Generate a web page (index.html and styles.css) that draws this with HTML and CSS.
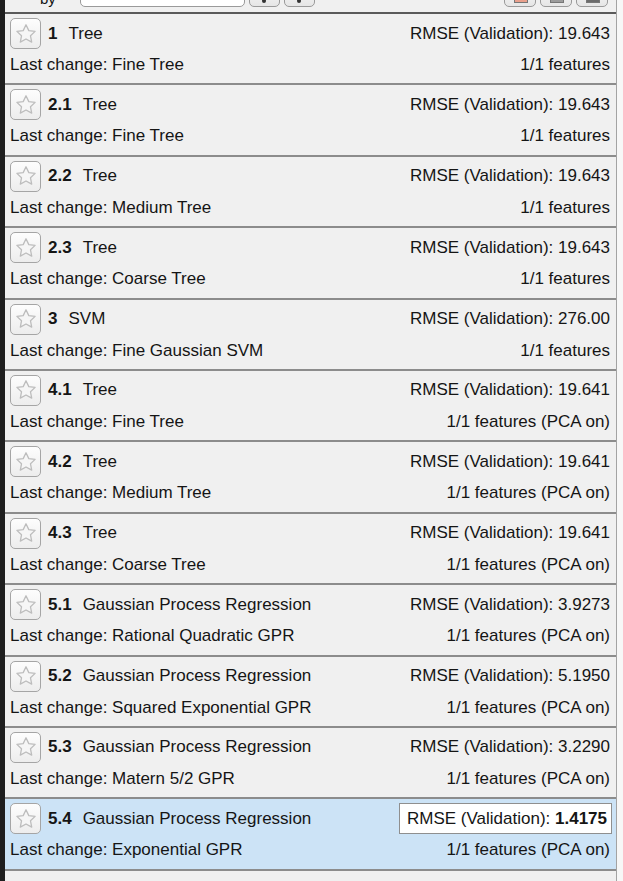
FILE: index.html
```html
<!DOCTYPE html>
<html lang="en">

<head>
  <meta charset="UTF-8">
  <meta name="viewport" content="width=device-width, initial-scale=1.0">
  <title>Models</title>
  <link rel="stylesheet" href="styles.css">
</head>

<body>
  <div class="side"></div>

  <div class="panel">
    <div class="toolbar">
      <span class="sort-label">Sort by</span>
      <span class="sort-box"></span>
      <span class="tool-btn"><i class="dot"></i></span>
      <span class="tool-btn"><i class="dot"></i></span>
      <span class="spacer"></span>
      <span class="tool-btn wide"><i class="mark red"></i></span>
      <span class="tool-btn wide"><i class="mark"></i></span>
      <span class="tool-btn wide"><i class="mark dark"></i></span>
    </div>

    <div class="models">
      <div class="model">
        <div class="model-top">
          <span class="star"><svg viewBox="0 0 24 24"><path d="M12 2.8l2.8 5.8 6.3.8-4.6 4.4 1.2 6.3L12 17l-5.7 3.1 1.2-6.3-4.6-4.4 6.3-.8z"/></svg></span>
          <span class="model-num">1</span>
          <span class="model-name">Tree</span>
          <span class="model-score">RMSE (Validation): 19.643</span>
        </div>
        <div class="model-bottom">
          <span>Last change: Fine Tree</span>
          <span>1/1 features</span>
        </div>
      </div>

      <div class="model">
        <div class="model-top">
          <span class="star"><svg viewBox="0 0 24 24"><path d="M12 2.8l2.8 5.8 6.3.8-4.6 4.4 1.2 6.3L12 17l-5.7 3.1 1.2-6.3-4.6-4.4 6.3-.8z"/></svg></span>
          <span class="model-num">2.1</span>
          <span class="model-name">Tree</span>
          <span class="model-score">RMSE (Validation): 19.643</span>
        </div>
        <div class="model-bottom">
          <span>Last change: Fine Tree</span>
          <span>1/1 features</span>
        </div>
      </div>

      <div class="model">
        <div class="model-top">
          <span class="star"><svg viewBox="0 0 24 24"><path d="M12 2.8l2.8 5.8 6.3.8-4.6 4.4 1.2 6.3L12 17l-5.7 3.1 1.2-6.3-4.6-4.4 6.3-.8z"/></svg></span>
          <span class="model-num">2.2</span>
          <span class="model-name">Tree</span>
          <span class="model-score">RMSE (Validation): 19.643</span>
        </div>
        <div class="model-bottom">
          <span>Last change: Medium Tree</span>
          <span>1/1 features</span>
        </div>
      </div>

      <div class="model">
        <div class="model-top">
          <span class="star"><svg viewBox="0 0 24 24"><path d="M12 2.8l2.8 5.8 6.3.8-4.6 4.4 1.2 6.3L12 17l-5.7 3.1 1.2-6.3-4.6-4.4 6.3-.8z"/></svg></span>
          <span class="model-num">2.3</span>
          <span class="model-name">Tree</span>
          <span class="model-score">RMSE (Validation): 19.643</span>
        </div>
        <div class="model-bottom">
          <span>Last change: Coarse Tree</span>
          <span>1/1 features</span>
        </div>
      </div>

      <div class="model">
        <div class="model-top">
          <span class="star"><svg viewBox="0 0 24 24"><path d="M12 2.8l2.8 5.8 6.3.8-4.6 4.4 1.2 6.3L12 17l-5.7 3.1 1.2-6.3-4.6-4.4 6.3-.8z"/></svg></span>
          <span class="model-num">3</span>
          <span class="model-name">SVM</span>
          <span class="model-score">RMSE (Validation): 276.00</span>
        </div>
        <div class="model-bottom">
          <span>Last change: Fine Gaussian SVM</span>
          <span>1/1 features</span>
        </div>
      </div>

      <div class="model">
        <div class="model-top">
          <span class="star"><svg viewBox="0 0 24 24"><path d="M12 2.8l2.8 5.8 6.3.8-4.6 4.4 1.2 6.3L12 17l-5.7 3.1 1.2-6.3-4.6-4.4 6.3-.8z"/></svg></span>
          <span class="model-num">4.1</span>
          <span class="model-name">Tree</span>
          <span class="model-score">RMSE (Validation): 19.641</span>
        </div>
        <div class="model-bottom">
          <span>Last change: Fine Tree</span>
          <span>1/1 features (PCA on)</span>
        </div>
      </div>

      <div class="model">
        <div class="model-top">
          <span class="star"><svg viewBox="0 0 24 24"><path d="M12 2.8l2.8 5.8 6.3.8-4.6 4.4 1.2 6.3L12 17l-5.7 3.1 1.2-6.3-4.6-4.4 6.3-.8z"/></svg></span>
          <span class="model-num">4.2</span>
          <span class="model-name">Tree</span>
          <span class="model-score">RMSE (Validation): 19.641</span>
        </div>
        <div class="model-bottom">
          <span>Last change: Medium Tree</span>
          <span>1/1 features (PCA on)</span>
        </div>
      </div>

      <div class="model">
        <div class="model-top">
          <span class="star"><svg viewBox="0 0 24 24"><path d="M12 2.8l2.8 5.8 6.3.8-4.6 4.4 1.2 6.3L12 17l-5.7 3.1 1.2-6.3-4.6-4.4 6.3-.8z"/></svg></span>
          <span class="model-num">4.3</span>
          <span class="model-name">Tree</span>
          <span class="model-score">RMSE (Validation): 19.641</span>
        </div>
        <div class="model-bottom">
          <span>Last change: Coarse Tree</span>
          <span>1/1 features (PCA on)</span>
        </div>
      </div>

      <div class="model">
        <div class="model-top">
          <span class="star"><svg viewBox="0 0 24 24"><path d="M12 2.8l2.8 5.8 6.3.8-4.6 4.4 1.2 6.3L12 17l-5.7 3.1 1.2-6.3-4.6-4.4 6.3-.8z"/></svg></span>
          <span class="model-num">5.1</span>
          <span class="model-name">Gaussian Process Regression</span>
          <span class="model-score">RMSE (Validation): 3.9273</span>
        </div>
        <div class="model-bottom">
          <span>Last change: Rational Quadratic GPR</span>
          <span>1/1 features (PCA on)</span>
        </div>
      </div>

      <div class="model">
        <div class="model-top">
          <span class="star"><svg viewBox="0 0 24 24"><path d="M12 2.8l2.8 5.8 6.3.8-4.6 4.4 1.2 6.3L12 17l-5.7 3.1 1.2-6.3-4.6-4.4 6.3-.8z"/></svg></span>
          <span class="model-num">5.2</span>
          <span class="model-name">Gaussian Process Regression</span>
          <span class="model-score">RMSE (Validation): 5.1950</span>
        </div>
        <div class="model-bottom">
          <span>Last change: Squared Exponential GPR</span>
          <span>1/1 features (PCA on)</span>
        </div>
      </div>

      <div class="model">
        <div class="model-top">
          <span class="star"><svg viewBox="0 0 24 24"><path d="M12 2.8l2.8 5.8 6.3.8-4.6 4.4 1.2 6.3L12 17l-5.7 3.1 1.2-6.3-4.6-4.4 6.3-.8z"/></svg></span>
          <span class="model-num">5.3</span>
          <span class="model-name">Gaussian Process Regression</span>
          <span class="model-score">RMSE (Validation): 3.2290</span>
        </div>
        <div class="model-bottom">
          <span>Last change: Matern 5/2 GPR</span>
          <span>1/1 features (PCA on)</span>
        </div>
      </div>

      <div class="model selected">
        <div class="model-top">
          <span class="star"><svg viewBox="0 0 24 24"><path d="M12 2.8l2.8 5.8 6.3.8-4.6 4.4 1.2 6.3L12 17l-5.7 3.1 1.2-6.3-4.6-4.4 6.3-.8z"/></svg></span>
          <span class="model-num">5.4</span>
          <span class="model-name">Gaussian Process Regression</span>
          <span class="model-score best">RMSE (Validation): <b>1.4175</b></span>
        </div>
        <div class="model-bottom">
          <span>Last change: Exponential GPR</span>
          <span>1/1 features (PCA on)</span>
        </div>
      </div>
    </div>
  </div>
</body>

</html>
```

FILE: styles.css
```css
body {
  margin: 0;
  height: 881px;
  overflow: hidden;
  display: flex;
  background: #f7f7f7;
  font-family: "Liberation Sans", Arial, sans-serif;
  font-size: 17px;
  color: #151515;
}

.side {
  flex: 0 0 5px;
  background: #1e1e1e;
}

.panel {
  flex: 0 0 611px;
  background: #f0f0f0;
  border-right: 1px solid #a3a3a3;
}

/* top bar, mostly scrolled out of view */
.toolbar {
  height: 12px;
  display: flex;
  align-items: flex-end;
  gap: 4px;
  padding: 0 8px 0 35px;
  overflow: hidden;
  border-bottom: 2px solid #5a5a5a;
}

.toolbar > span {
  margin-bottom: 5px;
}

.sort-label {
  width: 36px;
  line-height: 20px;
  font-size: 15px;
  margin-bottom: 3px !important;
}

.sort-box {
  width: 163px;
  height: 22px;
  background: #fff;
  border: 1px solid #9a9a9a;
  border-radius: 5px;
}

.tool-btn {
  position: relative;
  width: 29px;
  height: 22px;
  background: linear-gradient(#fafafa, #e6e6e6);
  border: 1px solid #9a9a9a;
  border-radius: 5px;
}

.tool-btn.wide {
  width: 30px;
}

.spacer {
  flex: 1;
}

.dot {
  position: absolute;
  left: 12px;
  bottom: 3px;
  width: 4px;
  height: 4px;
  border-radius: 50%;
  background: #333;
}

.mark {
  position: absolute;
  left: 9px;
  bottom: 3px;
  width: 12px;
  height: 6px;
  background: #9c9c9c;
  border: 1px solid #777;
}

.mark.red {
  background: #e9a08c;
}

.mark.dark {
  background: #6c6c6c;
}

/* model list */
.model {
  height: 71.4px;
  box-sizing: border-box;
  padding: 4px 6px 0 5px;
  border-bottom: 2px solid #8c8c8c;
}

.model.selected {
  background: #cce3f6;
}

.model-top {
  height: 31px;
  display: flex;
  align-items: center;
}

.star {
  width: 31px;
  height: 31px;
  box-sizing: border-box;
  display: flex;
  align-items: center;
  justify-content: center;
  margin-right: 7px;
  background: linear-gradient(#fdfdfd, #ededed);
  border: 1px solid #a5a5a5;
  border-radius: 5px;
}

.star svg {
  width: 24px;
  height: 24px;
  fill: #f6f6f6;
  stroke: #bdbdbd;
  stroke-width: 1.3;
  stroke-linejoin: round;
}

.model-num {
  font-weight: bold;
  margin-right: 11px;
}

.model-name {
  flex: 1;
}

.model-score.best {
  height: 31px;
  box-sizing: border-box;
  display: flex;
  align-items: center;
  white-space: pre;
  padding: 0 4px 0 7px;
  margin-right: -2px;
  background: #fff;
  border: 1px solid #8f8f8f;
}

.model-bottom {
  height: 32px;
  display: flex;
  align-items: center;
  justify-content: space-between;
}
```
